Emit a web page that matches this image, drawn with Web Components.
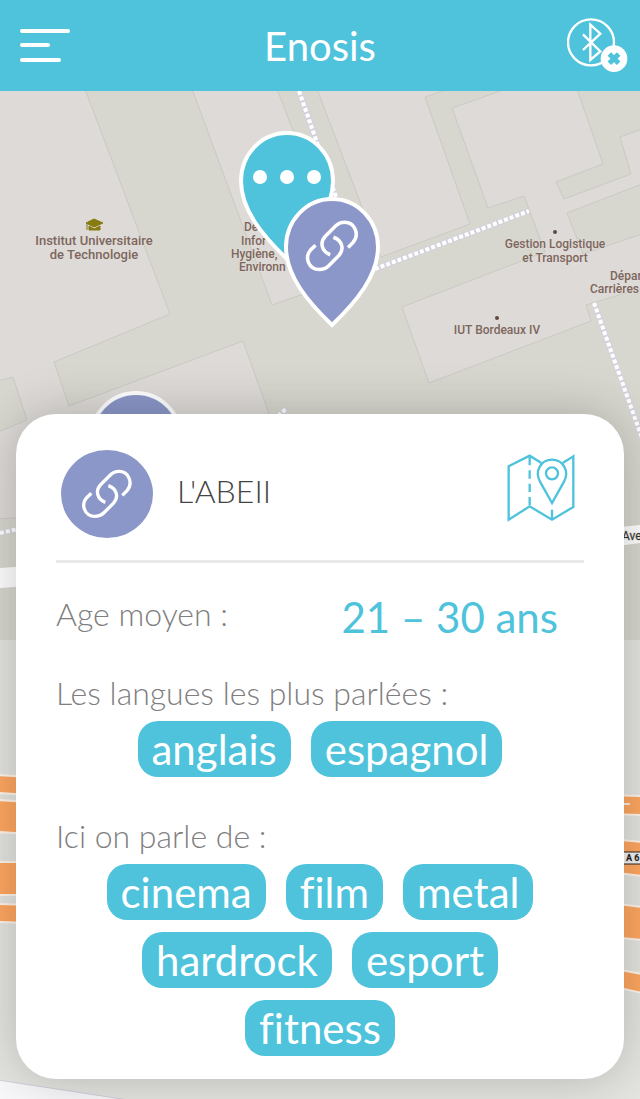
<!DOCTYPE html>
<html lang="fr">
<head>
<meta charset="utf-8">
<meta name="viewport" content="width=device-width, initial-scale=1">
<title>Enosis</title>
<style>
    body {
        margin: 0;
        font-family: Lato, "Open Sans", sans-serif;
        font-variant-ligatures: none;
        --main-color: #4ec3db;
        --place-color: #8c97c9;
    }
</style>
</head>
<body>
<enosis-app>
    <top-bar slot="header">Enosis</top-bar>
    <city-map slot="map"></city-map>
    <place-card slot="card">
        <span slot="name">L'ABEII</span>
        <age-range label="Age moyen :">21 – 30 ans</age-range>
        <tag-section label="Les langues les plus parlées :">
            <tag-pill>anglais</tag-pill>
            <tag-pill>espagnol</tag-pill>
        </tag-section>
        <tag-section label="Ici on parle de :">
            <tag-pill>cinema</tag-pill>
            <tag-pill>film</tag-pill>
            <tag-pill>metal</tag-pill>
            <tag-pill>hardrock</tag-pill>
            <tag-pill>esport</tag-pill>
            <tag-pill>fitness</tag-pill>
        </tag-section>
    </place-card>
</enosis-app>

<script>
// the chain icon is used on the map pins and on the card
const chain = `
    <g fill="none" stroke="#fff" stroke-width="10">
        <path d="M366 286L380 272C399 250 386 214 356 214C345 214 336 219 330 225L301 254C285 271 289 297 315 307"/>
        <path d="M273 280L259 293C241 313 252 349 284 349C295 349 304 345 310 339L339 310C356 292 350 266 324 257"/>
    </g>`;

// shared by every element: fill the shadow root from a template
function attach(element, html) {
    const template = document.createElement('template');
    template.innerHTML = html;
    element.attachShadow({mode: 'open'})
        .appendChild(template.content.cloneNode(true));
}

customElements.define('enosis-app',
class extends HTMLElement {
    constructor() {
        super();
        attach(this, `
        <style>
            :host {
                display: flex;
                flex-direction: column;
                min-height: 100vh;
            }
            main {
                flex: 1;
                display: grid;
                grid-template-columns: minmax(0, 1fr);
                overflow: hidden;
            }
            /* map and card share the same cell */
            ::slotted([slot="map"]),
            ::slotted([slot="card"]) { grid-area: 1 / 1; }
            ::slotted([slot="card"]) {
                align-self: end;
                margin: 0 16px 20px;
            }
        </style>
        <slot name="header"></slot>
        <main>
            <slot name="map"></slot>
            <slot name="card"></slot>
        </main>
        `);
    }
});

customElements.define('top-bar',
class extends HTMLElement {
    constructor() {
        super();
        attach(this, `
        <style>
            :host { display: block; }
            header {
                display: grid;
                grid-template-columns: 1fr auto 1fr;
                align-items: center;
                box-sizing: border-box;
                height: 91px;
                padding: 0 12px;
                background: var(--main-color);
                color: #fff;
            }
            h1 {
                margin: 0;
                font-size: 40px;
                line-height: 48px;
                font-weight: 400;
            }
            button {
                display: block;
                padding: 0;
                border: 0;
                background: none;
            }
            .menu {
                justify-self: start;
                padding-left: 8px;
            }
            .bluetooth { justify-self: end; }
            svg { display: block; }
        </style>
        <header>
            <button class="menu" aria-label="Menu">
                <svg width="50" height="34" stroke="#fff" stroke-width="4" stroke-linecap="round">
                    <path d="M2 2H48M2 16H28M2 31H39"/>
                </svg>
            </button>
            <h1><slot></slot></h1>
            <button class="bluetooth" aria-label="Bluetooth">
                <svg width="61" height="55" viewBox="740 56 183 165" fill="none" stroke="#fff" stroke-width="7">
                    <circle cx="812" cy="129" r="69"/>
                    <path d="M788 105L840 156L810 182V76L840 103L788 152"/>
                    <circle cx="881" cy="178" r="40" fill="#fff" stroke="none"/>
                    <path d="M867 164L895 192M895 164L867 192" stroke="#4ec3db" stroke-width="15"/>
                </svg>
            </button>
        </header>
        `);
    }
});

customElements.define('city-map',
class extends HTMLElement {
    constructor() {
        super();
        // a pin is drawn from its tip
        const pin = (x, y, color, icon) => `
            <g transform="translate(${x} ${y})">
                <path d="M0 -3C-24 -26 -46 -52 -46 -81C-46 -107 -26 -129 0 -129S46 -107 46 -81C46 -52 24 -26 0 -3Z"
                    fill="${color}" stroke="#fff" stroke-width="4"/>
                ${icon}
            </g>`;
        const pinChain = `<g transform="translate(0 -82) scale(.35) translate(-320 -282)">${chain}</g>`;
        const dots = `
            <g fill="#fff">
                <circle cx="-27" cy="-85" r="7"/>
                <circle cx="0" cy="-85" r="7"/>
                <circle cx="27" cy="-85" r="7"/>
            </g>`;
        attach(this, `
        <style>
            :host {
                display: block;
                position: relative;
                background: #d7d7cf;
            }
            svg {
                position: absolute;
                width: 100%;
                height: 100%;
            }
            text {
                font-family: Roboto, sans-serif;
                font-size: 12px;
                font-weight: 500;
                fill: #7d665b;
                stroke: #e0dcd9;
                stroke-width: 1px;
                paint-order: stroke;
                text-anchor: middle;
            }
            .large { font-size: 13px; }
            .start { text-anchor: start; }
            .building { fill: #dddad7; stroke: #cbc9c4; }
            .casing { fill: none; stroke: #d3d2dc; stroke-width: 6px; }
            .path { fill: none; stroke: #fff; stroke-width: 4px; stroke-dasharray: 4 2; }
            .road { fill: #ffa761; stroke: #fff5ea; stroke-width: 2px; }
        </style>
        <svg viewBox="0 91 640 1008" preserveAspectRatio="xMidYMin slice">
            <rect y="91" width="640" height="1008" fill="#d7d7cf"/>
            <rect y="640" width="640" height="459" fill="#e4e4e0"/>
            <g class="building">
                <path d="M-2 89H85L170 314L54 362L69 406L243 341L300 500L-2 519V432L27 420L13 377L-2 381Z"/>
                <path d="M192 89H277L350 278L272 305Z"/>
                <path d="M317 89H448L425 97L470 224L381 257Z"/>
                <path d="M452 108L506 89H577L603 164L556 182L564 199L631 174L620 137L642 129V184L567 213L583 254L642 234V288L586 305L591 321L429 383L402 307L545 252L524 196L488 208Z"/>
            </g>
            <g class="casing">
                <path d="M299 91L342 214M375 269L529 211M594 303L642 438M278 416L287 408M0 533L18 529"/>
            </g>
            <g class="path">
                <path d="M299 91L342 214M375 269L529 211M594 303L642 438M278 416L287 408M0 533L18 529"/>
            </g>

            <path d="M0 568L30 566V586L0 588ZM610 528L640 525V543L610 547Z" fill="#fff"/>
            <g class="road">
                <path d="M-2 775L30 777V795L-2 793ZM-2 800L30 802V834L-2 832ZM-2 862H30V895H-2ZM-2 904L30 905V923L-2 922Z"/>
                <path d="M610 795L642 796V815L610 814ZM610 839L642 842V876L610 872ZM610 903L642 907V940L610 937ZM610 968L642 974V993L610 986Z"/>
            </g>
            <path d="M618 804H630" stroke="#fdeee0" stroke-width="2"/>
            <rect x="610" y="852" width="32" height="12" fill="#f4f3f1" stroke="#2c2624"/>
            <path d="M-2 1080L135 1101H-2Z" fill="#f8f8fa" stroke="#cfcedb"/>

            <path d="M86 223L94 219L103 223L94 227ZM89 226L94 229L100 226V230H89ZM87 223V230" fill="#867a10" stroke="#867a10"/>
            <circle cx="555" cy="232" r="2" fill="#604a40"/>
            <circle cx="497" cy="318" r="2" fill="#604a40"/>
            <text class="large" x="94" y="245">Institut Universitaire</text>
            <text class="large" x="94" y="259">de Technologie</text>
            <text class="start" x="244" y="231">De</text>
            <text class="start" x="241" y="245">Infor</text>
            <text class="start" x="231" y="258">Hygiène,</text>
            <text class="start" x="239" y="271">Environn</text>
            <text x="555" y="248">Gestion Logistique</text>
            <text x="555" y="262">et Transport</text>
            <text x="497" y="334">IUT Bordeaux IV</text>
            <text class="start" x="610" y="280">Dépar</text>
            <text class="start" x="590" y="293">Carrières</text>
            <text class="start" x="622" y="540" style="fill: #333; font-weight: 400">Ave</text>
            <text class="start" x="626" y="861" style="fill: #222; font-size: 9px; font-weight: 700">A 6</text>

            ${pin(136, 522, '#8c97c9', '')}
            ${pin(287, 262, '#4ec3db', dots)}
            ${pin(332, 328, '#8c97c9', pinChain)}
        </svg>
        `);
    }
});

customElements.define('place-card',
class extends HTMLElement {
    constructor() {
        super();
        attach(this, `
        <style>
            :host {
                display: block;
                position: relative;
                padding: 36px 40px 23px;
                border-radius: 40px;
                background: #fff;
                box-shadow: 0 0 50px rgba(0, 0, 0, .22);
            }
            header {
                display: flex;
                align-items: flex-start;
                gap: 24px;
                padding: 0 9px 22px 5px;
                border-bottom: 3px solid #ebe9e9;
            }
            .avatar {
                display: grid;
                place-items: center;
                width: 92px;
                height: 88px;
                border-radius: 50%;
                background: var(--place-color);
            }
            h2 {
                flex: 1;
                margin: 0;
                font-size: 32px;
                line-height: 82px;
                font-weight: 300;
                color: #444;
            }
            button {
                padding: 4px 0 0;
                border: 0;
                background: none;
            }
            svg { display: block; }
        </style>
        <header>
            <div class="avatar">
                <svg width="50" height="50" viewBox="245 207 150 150">${chain}</svg>
            </div>
            <h2><slot name="name"></slot></h2>
            <button aria-label="Voir sur la carte">
                <svg width="68" height="68" viewBox="562 163 204 204" fill="none" stroke="#4ec3db" stroke-width="7">
                    <path d="M665 190L630 168L567 200V360L630 320L697 360L761 322V170L729 190"/>
                    <path d="M630 172V320" stroke-dasharray="25 15"/>
                    <path d="M697 330V360"/>
                    <path d="M697 310L661 246C644 214 664 180 697 180S750 214 733 246Z"/>
                    <circle cx="697" cy="221" r="18"/>
                </svg>
            </button>
        </header>
        <slot></slot>
        `);
    }
});

customElements.define('age-range',
class extends HTMLElement {
    constructor() {
        super();
        attach(this, `
        <style>
            :host {
                display: flex;
                justify-content: space-between;
                align-items: flex-start;
                padding: 24px 26px 26px 0;
            }
            .label {
                font-size: 32px;
                line-height: 54px;
                font-weight: 300;
                color: #807e7f;
            }
            .value {
                font-size: 42px;
                line-height: 60px;
                color: var(--main-color);
            }
        </style>
        <span class="label">${this.getAttribute('label')}</span>
        <span class="value"><slot></slot></span>
        `);
    }
});

customElements.define('tag-section',
class extends HTMLElement {
    constructor() {
        super();
        attach(this, `
        <style>
            :host { display: block; }
            :host(:not(:last-child)) { margin-bottom: 39px; }
            h3 {
                margin: 0 0 8px;
                font-size: 32px;
                line-height: 40px;
                font-weight: 300;
                color: #807e7f;
            }
            .tags {
                display: flex;
                flex-wrap: wrap;
                justify-content: center;
                gap: 12px 20px;
                padding: 0 20px;
            }
        </style>
        <h3>${this.getAttribute('label')}</h3>
        <div class="tags"><slot></slot></div>
        `);
    }
});

customElements.define('tag-pill',
class extends HTMLElement {
    constructor() {
        super();
        attach(this, `
        <style>
            :host {
                display: block;
                padding: 0 14px;
                border-radius: 20px;
                font-size: 42px;
                line-height: 56px;
                color: #fff;
                background: var(--main-color);
            }
        </style>
        <slot></slot>
        `);
    }
});
</script>
</body>
</html>
